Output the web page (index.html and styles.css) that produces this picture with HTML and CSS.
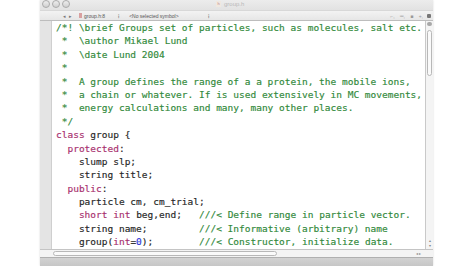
FILE: index.html
```html
<!DOCTYPE html>
<html>
<head>
<meta charset="utf-8">
<link rel="stylesheet" href="styles.css">
</head>
<body>
<div class="window">
  <div class="titlebar">
    <div class="lights"><span class="light"></span><span class="light"></span><span class="light"></span></div>
    <div class="title"><span class="ficon">h</span>group.h</div>
  </div>
  <div class="toolbar">
    <span class="arrow">◂</span><span class="arrow">▸</span>
    <span class="fileicon"></span><span class="tb">group.h:8</span>
    <span class="updown">⁝</span>
    <span class="tb sym">&lt;No selected symbol&gt;</span>
    <span class="updown">⁝</span>
    <span class="spacer"></span>
    <span class="ticons">⌐, ═, ■ +, <span class="lock"></span></span>
  </div>
  <div class="main">
    <div class="gutter"></div>
    <div class="code">
      <div class="line c">/*! \brief Groups set of particles, such as molecules, salt etc.</div>
      <div class="line c"> *  \author Mikael Lund</div>
      <div class="line c"> *  \date Lund 2004</div>
      <div class="line c"> *</div>
      <div class="line c"> *  A group defines the range of a a protein, the mobile ions,</div>
      <div class="line c"> *  a chain or whatever. If is used extensively in MC movements,</div>
      <div class="line c"> *  energy calculations and many, many other places.</div>
      <div class="line c"> */</div>
      <div class="line"><span class="k">class</span> group {</div>
      <div class="line">  <span class="k">protected</span>:</div>
      <div class="line">    slump slp;</div>
      <div class="line">    string title;</div>
      <div class="line">  <span class="k">public</span>:</div>
      <div class="line">    particle cm, cm_trial;</div>
      <div class="line">    <span class="k">short</span> <span class="k">int</span> beg,end;   <span class="c">///&lt; Define range in particle vector.</span></div>
      <div class="line">    string name;         <span class="c">///&lt; Informative (arbitrary) name</span></div>
      <div class="line">    group(<span class="k">int</span>=<span class="n">0</span>);        <span class="c">///&lt; Constructor, initialize data.</span></div>
    </div>
    <div class="vscroll"><div class="vsplit"></div><div class="vthumb"></div><div class="varrows">▴▾</div></div>
  </div>
  <div class="hscroll"><div class="hthumb"></div><div class="harrows">◂ ▸</div></div>
  <div class="bottombar"></div>
</div>
</body>
</html>
```
FILE: styles.css
```css
html, body { margin: 0; padding: 0; background: #fff; }
body { width: 474px; height: 266px; overflow: hidden; font-family: "Liberation Sans", Arial, sans-serif; }
.window {
  margin-left: 40px; width: 393px; height: 266px;
  display: flex; flex-direction: column; background: #d6d6d6;
  box-shadow: 0 0 2px rgba(0,0,0,0.15);
}
.titlebar {
  height: 10px; background: linear-gradient(#ececec, #e2e2e2);
  display: flex; align-items: center; position: relative;
}
.lights { display: flex; gap: 2px; padding-left: 2px; margin-top: -2px; }
.light {
  width: 6px; height: 6px; border-radius: 50%;
  border: 0.5px solid #aaa; background: linear-gradient(#eee, #d0d0d0);
}
.title {
  position: absolute; left: 176px; top: 0; font-size: 6px; color: #b9b9b9; line-height: 8px;
  display: flex; align-items: center; gap: 3px;
}
.ficon { display: inline-block; width: 5px; height: 6px; background: #f0e8e0; color: #c08080; font-size: 4px; line-height: 6px; text-align: center; }
.toolbar {
  height: 9px; background: linear-gradient(#f3f3f3, #e6e6e6);
  border-top: 1px solid #d8d8d8; border-bottom: 1px solid #bdbdbd;
  display: flex; align-items: center; font-size: 5px; color: #666; padding-left: 23px;
}
.arrow { font-size: 5px; color: #777; margin-right: 3px; }
.fileicon { width: 3px; height: 5px; background: #d9a0a0; margin-left: 4px; margin-right: 2px; }
.tb { color: #555; }
.updown { margin-left: 13px; margin-right: 10px; color: #555; font-weight: bold; }
.sym { width: 66px; }
.spacer { flex: 1; }
.ticons { color: #999; font-size: 5px; word-spacing: 4px; padding-right: 2px; display: flex; align-items: center; gap: 4px; }
.lock { display: inline-block; width: 4px; height: 4px; background: #777; border-radius: 1px; }
.main { flex: 1; display: flex; min-height: 0; }
.gutter { width: 11px; background: #e4e4e4; border-right: 1px solid #cfcfcf; }
.code {
  flex: 1; margin: 0; padding: 0 0 0 4px; background: #fff;
  font-family: "DejaVu Sans Mono", monospace; font-size: 9.5px; line-height: 13.4px;
  color: #262626; overflow: hidden;
  -webkit-text-stroke: 0.15px currentColor;
}
.line { white-space: pre; height: 13.4px; }
.c { color: #31893a; }
.k { color: #a8306e; }
.n { color: #2d36d8; }
.vscroll {
  width: 7px; background: #f4f4f4; border-left: 1px solid #c9c9c9;
  display: flex; flex-direction: column; align-items: center;
}
.vsplit { width: 5px; height: 4px; margin-top: 1px; border-radius: 2px; background: #a8a8a8; }
.vthumb { width: 5px; height: 46px; margin-top: 4px; border-radius: 3px; background: #fafafa; border: 1px solid #b8b8b8; box-sizing: border-box; }
.varrows { margin-top: auto; font-size: 4px; line-height: 5px; color: #888; writing-mode: vertical-lr; padding-bottom: 1px; }
.hscroll {
  height: 7px; background: #f4f4f4; border-top: 1px solid #c4c4c4;
  display: flex; align-items: center; padding-left: 13px;
}
.hthumb { width: 224px; height: 5px; border-radius: 3px; border: 1px solid #b8b8b8; background: #fafafa; box-sizing: border-box; }
.harrows { margin-left: auto; margin-right: 12px; font-size: 4px; color: #888; }
.bottombar { height: 8px; background: linear-gradient(#d2d2d2, #c6c6c6); border-top: 1px solid #b0b0b0; }
```
